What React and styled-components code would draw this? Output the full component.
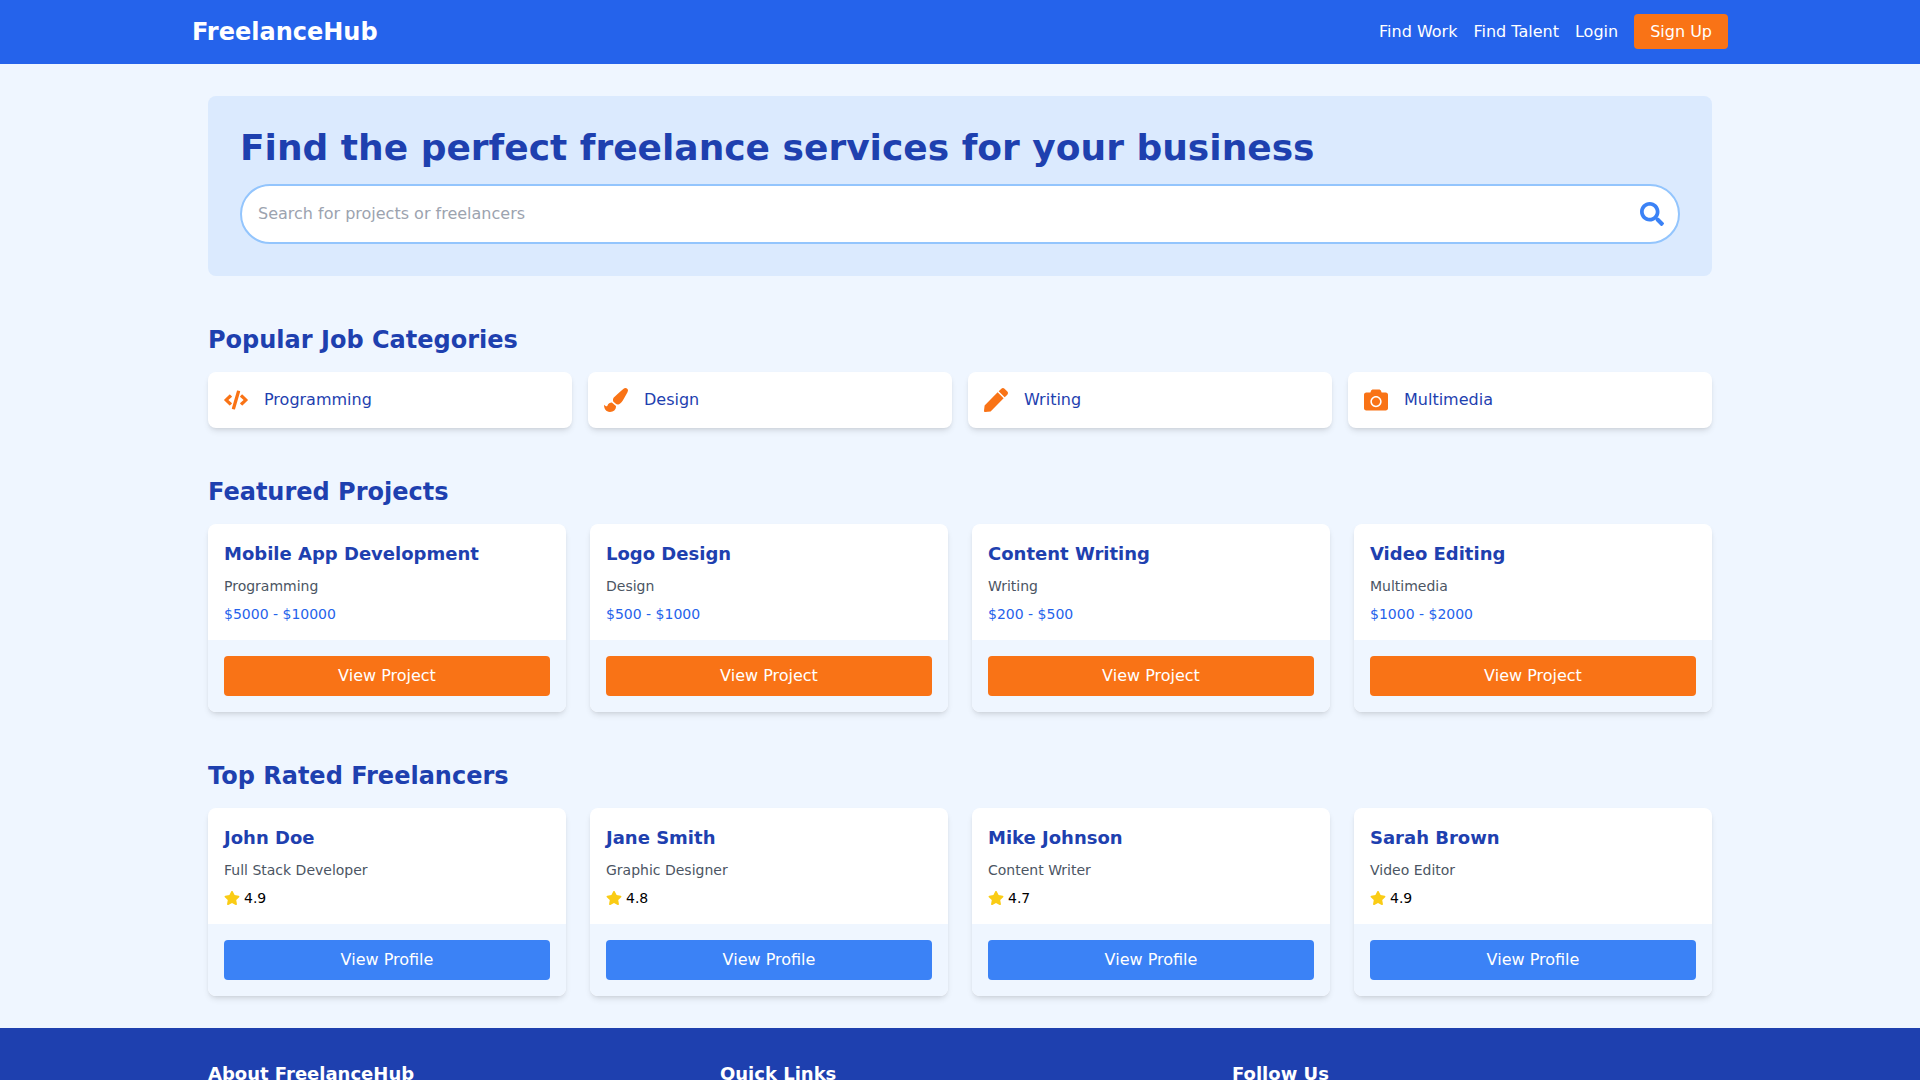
import React from "react";
import styled, { createGlobalStyle } from "styled-components";
import {
  FaCamera,
  FaCode,
  FaPaintBrush,
  FaPen,
  FaSearch,
  FaStar
} from "react-icons/fa";

const GlobalStyle = createGlobalStyle`
  *,
  *::before,
  *::after {
    box-sizing: border-box;
  }

  body {
    margin: 0;
    background: #eff6ff;
    color: #000;
    font-family: "DejaVu Sans", sans-serif;
    font-size: 16px;
    line-height: 24px;
  }

  h1, h2, h3, p, ul {
    margin: 0;
    padding: 0;
  }

  svg {
    display: block;
    flex-shrink: 0;
  }
`;

const Header = styled.header`
  background: #2563eb;
  color: white;
  padding: 16px 0;
`;

const HeaderInner = styled.div`
  display: flex;
  align-items: center;
  justify-content: space-between;
  max-width: 1536px;
  margin: 0 auto;
`;

const Brand = styled.a`
  color: white;
  font-size: 24px;
  font-weight: bold;
  line-height: 32px;
  text-decoration: none;
`;

const NavList = styled.ul`
  display: flex;
  gap: 16px;
  list-style: none;
`;

const NavLink = styled.a`
  color: white;
  text-decoration: none;

  &:hover {
    text-decoration: underline;
  }
`;

const SignUpLink = styled(NavLink)`
  padding: 8px 16px;
  border-radius: 4px;
  background: #f97316;
`;

const Main = styled.main`
  display: flex;
  flex-direction: column;
  gap: 48px;
  max-width: 1536px;
  margin: 0 auto;
  padding: 32px 16px;
`;

const Hero = styled.section`
  padding: 32px;
  border-radius: 8px;
  background: #dbeafe;
`;

const HeroTitle = styled.h1`
  margin-bottom: 16px;
  color: #1e40af;
  font-size: 36px;
  line-height: 40px;
`;

const SearchForm = styled.form`
  display: flex;
  align-items: center;
  padding-right: 14px;
  border: 2px solid #93c5fd;
  border-radius: 30px;
  background: white;
`;

const SearchInput = styled.input`
  flex: 1;
  min-width: 0;
  padding: 16px;
  border: none;
  border-radius: 30px;
  background: transparent;
  font: inherit;

  &::placeholder {
    color: #9ca3af;
  }

  &:focus {
    outline: none;
  }
`;

const SearchButton = styled.button`
  padding: 0;
  border: none;
  background: transparent;
  color: #3b82f6;
  cursor: pointer;
`;

const SectionTitle = styled.h2`
  margin-bottom: 16px;
  color: #1e40af;
  font-size: 24px;
  line-height: 32px;
`;

const Grid = styled.div`
  display: grid;
  grid-template-columns: repeat(${({ columns }) => columns}, 1fr);
  gap: ${({ gap }) => gap};
`;

const Category = styled.a`
  display: flex;
  align-items: center;
  gap: 16px;
  padding: 16px;
  border-radius: 8px;
  background: white;
  box-shadow: 0 4px 6px -1px rgba(0, 0, 0, 0.1),
    0 2px 4px -2px rgba(0, 0, 0, 0.1);
  color: #1e40af;
  text-decoration: none;

  svg {
    color: #f97316;
  }
`;

const Card = styled.article`
  overflow: hidden;
  border-radius: 8px;
  background: white;
  box-shadow: 0 4px 6px -1px rgba(0, 0, 0, 0.1),
    0 2px 4px -2px rgba(0, 0, 0, 0.1);
`;

const CardBody = styled.div`
  display: flex;
  flex-direction: column;
  gap: 8px;
  padding: 16px;
  font-size: 14px;
  line-height: 20px;
`;

const CardTitle = styled.h3`
  color: #1e40af;
  font-size: 18px;
  line-height: 28px;
`;

const Subtitle = styled.p`
  color: #4b5563;
`;

const Budget = styled.p`
  color: #2563eb;
`;

const Rating = styled.p`
  display: flex;
  align-items: center;
  gap: 4px;

  svg {
    color: #facc15;
  }
`;

const CardFooter = styled.div`
  padding: 16px;
  background: #eff6ff;
`;

const CardButton = styled.button`
  display: block;
  width: 100%;
  padding: 8px 16px;
  border: none;
  border-radius: 4px;
  background: ${({ color }) => color};
  color: white;
  font: inherit;
  cursor: pointer;
`;

const Footer = styled.footer`
  background: #1e40af;
  color: white;
`;

const FooterInner = styled.div`
  max-width: 1536px;
  margin: 0 auto;
  padding: 32px 16px;
`;

const FooterTitle = styled.h3`
  font-size: 18px;
  line-height: 28px;
`;

const categories = [
  { name: "Programming", Icon: FaCode },
  { name: "Design", Icon: FaPaintBrush },
  { name: "Writing", Icon: FaPen },
  { name: "Multimedia", Icon: FaCamera }
];

const projects = [
  {
    title: "Mobile App Development",
    category: "Programming",
    budget: "$5000 - $10000"
  },
  { title: "Logo Design", category: "Design", budget: "$500 - $1000" },
  { title: "Content Writing", category: "Writing", budget: "$200 - $500" },
  { title: "Video Editing", category: "Multimedia", budget: "$1000 - $2000" }
];

const freelancers = [
  { name: "John Doe", role: "Full Stack Developer", rating: 4.9 },
  { name: "Jane Smith", role: "Graphic Designer", rating: 4.8 },
  { name: "Mike Johnson", role: "Content Writer", rating: 4.7 },
  { name: "Sarah Brown", role: "Video Editor", rating: 4.9 }
];

const footerSections = ["About FreelanceHub", "Quick Links", "Follow Us"];

const App = () => (
  <>
    <GlobalStyle />
    <Header>
      <HeaderInner>
        <Brand href="#">FreelanceHub</Brand>
        <nav>
          <NavList>
            <li>
              <NavLink href="#">Find Work</NavLink>
            </li>
            <li>
              <NavLink href="#">Find Talent</NavLink>
            </li>
            <li>
              <NavLink href="#">Login</NavLink>
            </li>
            <li>
              <SignUpLink href="#">Sign Up</SignUpLink>
            </li>
          </NavList>
        </nav>
      </HeaderInner>
    </Header>

    <Main>
      <Hero>
        <HeroTitle>Find the perfect freelance services for your business</HeroTitle>
        <SearchForm onSubmit={event => event.preventDefault()}>
          <SearchInput
            type="text"
            aria-label="Search for projects or freelancers"
            placeholder="Search for projects or freelancers"
          />
          <SearchButton type="submit" aria-label="Search">
            <FaSearch size={24} />
          </SearchButton>
        </SearchForm>
      </Hero>

      <section>
        <SectionTitle>Popular Job Categories</SectionTitle>
        <Grid columns={4} gap="16px">
          {categories.map(({ name, Icon }) => (
            <Category key={name} href="#">
              <Icon size={24} />
              {name}
            </Category>
          ))}
        </Grid>
      </section>

      <section>
        <SectionTitle>Featured Projects</SectionTitle>
        <Grid columns={4} gap="24px">
          {projects.map(({ title, category, budget }) => (
            <Card key={title}>
              <CardBody>
                <CardTitle>{title}</CardTitle>
                <Subtitle>{category}</Subtitle>
                <Budget>{budget}</Budget>
              </CardBody>
              <CardFooter>
                <CardButton color="#f97316">View Project</CardButton>
              </CardFooter>
            </Card>
          ))}
        </Grid>
      </section>

      <section>
        <SectionTitle>Top Rated Freelancers</SectionTitle>
        <Grid columns={4} gap="24px">
          {freelancers.map(({ name, role, rating }) => (
            <Card key={name}>
              <CardBody>
                <CardTitle>{name}</CardTitle>
                <Subtitle>{role}</Subtitle>
                <Rating>
                  <FaStar size={16} />
                  {rating}
                </Rating>
              </CardBody>
              <CardFooter>
                <CardButton color="#3b82f6">View Profile</CardButton>
              </CardFooter>
            </Card>
          ))}
        </Grid>
      </section>
    </Main>

    <Footer>
      <FooterInner>
        <Grid columns={3} gap="32px">
          {footerSections.map(title => (
            <FooterTitle key={title}>{title}</FooterTitle>
          ))}
        </Grid>
      </FooterInner>
    </Footer>
  </>
);

export default App;
